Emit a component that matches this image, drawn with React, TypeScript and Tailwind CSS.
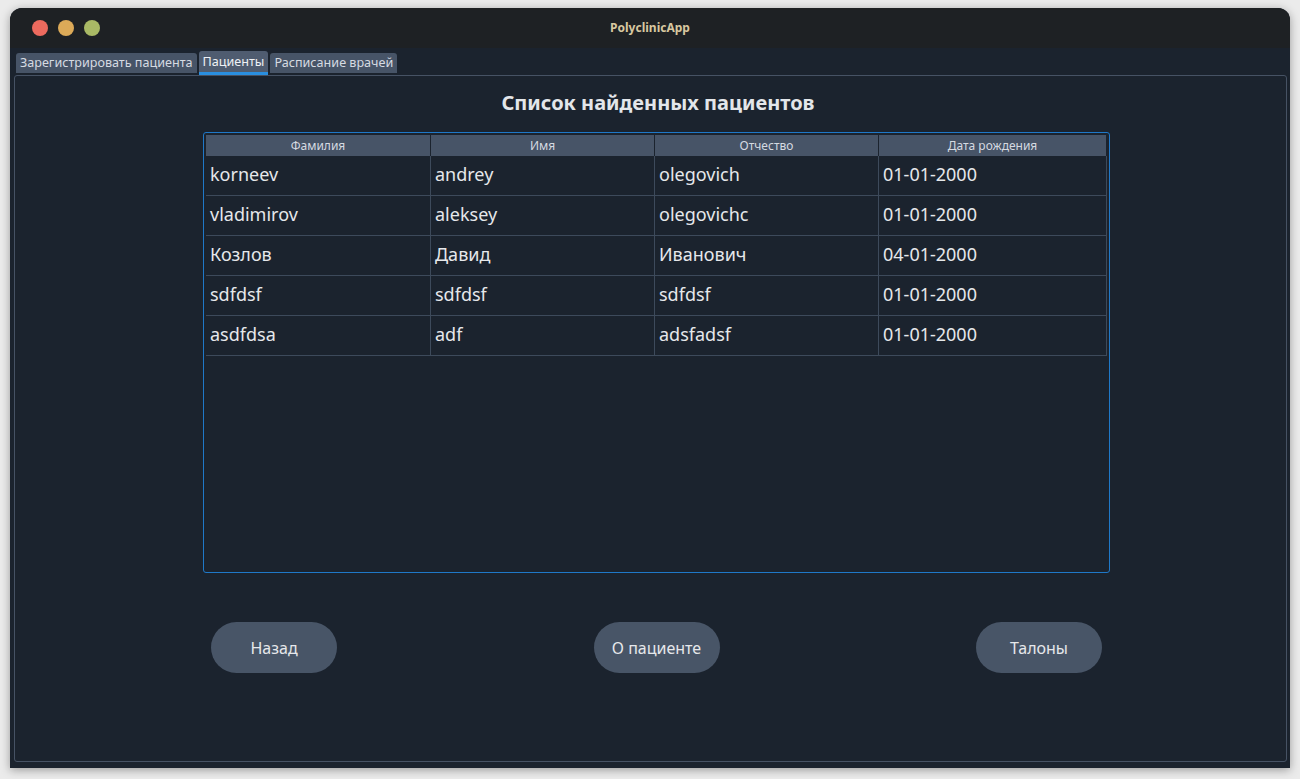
import React from "react";

const rows = [
  ["korneev", "andrey", "olegovich", "01-01-2000"],
  ["vladimirov", "aleksey", "olegovichc", "01-01-2000"],
  ["Козлов", "Давид", "Иванович", "04-01-2000"],
  ["sdfdsf", "sdfdsf", "sdfdsf", "01-01-2000"],
  ["asdfdsa", "adf", "adsfadsf", "01-01-2000"],
];

const headers = ["Фамилия", "Имя", "Отчество", "Дата рождения"];

export default function App() {
  return (
    <div
      className="w-[1300px] h-[779px] bg-[#ebebeb] pt-[8px] pl-[10px] overflow-hidden"
      style={{ fontFamily: '"Noto Sans", "Open Sans", sans-serif' }}
    >
      <div className="w-[1280px] h-[760px] rounded-t-[12px] bg-[#1b232e] flex flex-col overflow-hidden shadow-[0_2px_10px_rgba(0,0,0,0.35)]">
        {/* Title bar */}
        <div className="relative h-[40px] bg-[#1e2124] flex items-center shrink-0">
          <div className="flex items-center gap-[10px] pl-[22px]">
            <span className="w-[16px] h-[16px] rounded-full bg-[#ed6a5e]" />
            <span className="w-[16px] h-[16px] rounded-full bg-[#dcaa58]" />
            <span className="w-[16px] h-[16px] rounded-full bg-[#a9b965]" />
          </div>
          <div className="absolute inset-0 flex items-center justify-center text-[12px] font-bold text-[#d8c8a0]">
            PolyclinicApp
          </div>
        </div>

        {/* Tabs */}
        <div className="flex items-end h-[27px] pl-[6px] gap-[2px] shrink-0">
          <div className="h-[20px] px-[4px] bg-[#475467] rounded-t-[3px] text-[12.6px] leading-[20px] text-[#d6dbe2] mb-[2px]">
            Зарегистрировать пациента
          </div>
          <div className="h-[24px] px-[4px] bg-[#4f5c70] rounded-t-[3px] text-[12.6px] leading-[21px] text-[#eef1f5] border-b-[3px] border-[#2a8fe0]">
            Пациенты
          </div>
          <div className="h-[20px] px-[4px] bg-[#475467] rounded-t-[3px] text-[12.6px] leading-[20px] text-[#d6dbe2] mb-[2px]">
            Расписание врачей
          </div>
        </div>

        {/* Pane */}
        <div className="ml-[4px] mr-[3px] h-[687px] border border-[#465264] rounded-[3px] flex flex-col items-center">
          <div className="w-[907px] ml-[12px] flex flex-col">
            <div className="mt-[15px] h-[24px] text-center text-[20px] font-bold text-[#e3e6ea] leading-[24px] pl-[3px]">
              Список найденных пациентов
            </div>
            <div className="mt-[17px] h-[441px] border border-[#1f78c8] rounded-[3px] p-[2px]">
              <div className="grid grid-cols-[225px_224px_224px_1fr]">
                {headers.map((h) => (
                  <div
                    key={h}
                    className="h-[21px] bg-[#475467] text-[12px] leading-[21px] text-center text-[#d5dae1] border-r border-[#1b232e]"
                  >
                    {h}
                  </div>
                ))}
              </div>
              {rows.map((r, i) => (
                <div key={i} className="grid grid-cols-[225px_224px_224px_1fr]">
                  {r.map((c, j) => (
                    <div
                      key={j}
                      className="h-[40px] border-b border-r border-[#3d4a5b] pl-[4px] text-[18px] leading-[37px] text-[#e6e8eb]"
                    >
                      {c}
                    </div>
                  ))}
                </div>
              ))}
            </div>
            <div className="mt-[49px] flex justify-between px-[8px]">
              {["Назад", "О пациенте", "Талоны"].map((b) => (
                <button
                  key={b}
                  className="w-[126px] h-[51px] rounded-full bg-[#485567] text-[16px] text-[#e6e8eb]"
                >
                  {b}
                </button>
              ))}
            </div>
          </div>
        </div>
      </div>
    </div>
  );
}
